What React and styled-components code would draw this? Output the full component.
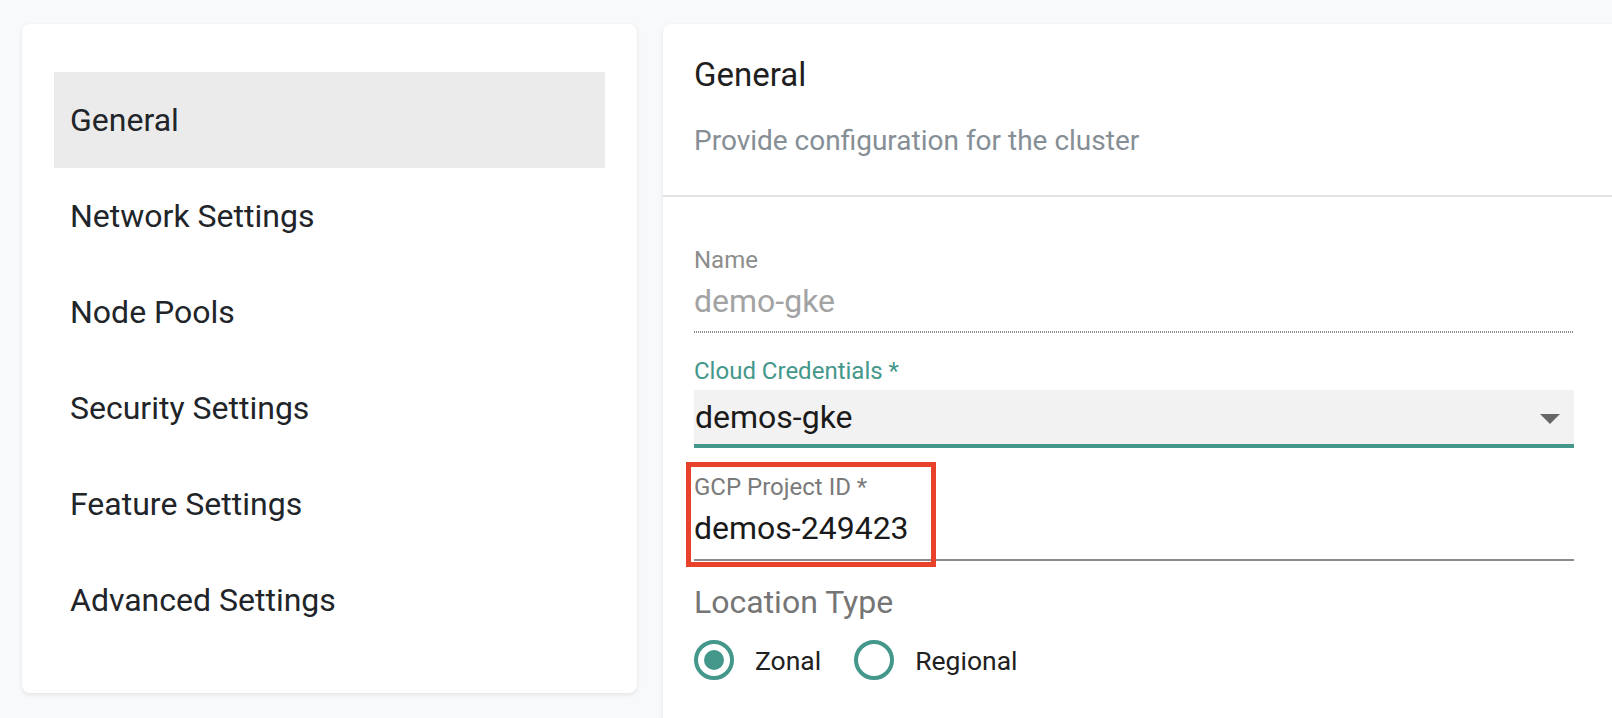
import React from "react";
import styled, { createGlobalStyle } from "styled-components";

const GlobalStyle = createGlobalStyle`
  html, body {
    margin: 0;
    padding: 0;
    background: #f8f9fa;
    overflow: hidden;
    font-family: Roboto, "Liberation Sans", Arial, sans-serif;
  }
  * { box-sizing: border-box; }
`;

const Page = styled.div`
  display: flex;
  align-items: flex-start;
  gap: 26px;
  width: 1640px;
  padding: 24px 0 0 22px;
`;

const SideCard = styled.nav`
  flex: 0 0 615px;
  background: #ffffff;
  border-radius: 8px;
  box-shadow: 0 2px 5px rgba(0, 0, 0, 0.08), 0 0 2px rgba(0, 0, 0, 0.04);
  padding: 48px 32px 45px;
  display: flex;
  flex-direction: column;
`;

const MenuItem = styled.div`
  height: 96px;
  display: flex;
  align-items: center;
  padding: 0 16px;
  font-size: 32px;
  color: #212529;
  background: ${(p) => (p.$active ? "#ebebeb" : "transparent")};
`;

const MainCard = styled.section`
  flex: 1;
  min-height: 720px;
  background: #ffffff;
  border-radius: 8px 0 0 0;
  box-shadow: 0 2px 5px rgba(0, 0, 0, 0.08), 0 0 2px rgba(0, 0, 0, 0.04);
`;

const Header = styled.header`
  padding: 31px 32px 36px 31px;
  border-bottom: 2px solid #e3e3e3;
`;

const Title = styled.h2`
  margin: 0;
  font-size: 33px;
  line-height: 40px;
  font-weight: 400;
  color: #1f1f1f;
`;

const Subtitle = styled.p`
  margin: 28px 0 0;
  font-size: 28px;
  line-height: 36px;
  color: #868e96;
`;

const Body = styled.div`
  padding: 49px 66px 0 31px;
  display: flex;
  flex-direction: column;
`;

const Field = styled.div`
  position: relative;
  display: flex;
  flex-direction: column;
  margin-top: ${(p) => p.$mt || 0}px;
`;

const Label = styled.label`
  font-size: 24px;
  line-height: 28px;
  color: ${(p) => p.$color || "#7a7a7a"};
`;

const Value = styled.div`
  margin-top: 7px;
  font-size: 32px;
  line-height: 40px;
  padding-bottom: ${(p) => (p.$dotted ? 12 : 11)}px;
  color: ${(p) => (p.$disabled ? "#a3a3a3" : "#1a1a1a")};
  ${(p) =>
    p.$dotted
      ? `background-image: linear-gradient(to right, #8c8c8c 50%, transparent 50%);
         background-size: 2px 2px;
         background-repeat: repeat-x;
         background-position: left bottom;`
      : `border-bottom: 2px solid #8c8c8c;`}
`;

const Select = styled.div`
  margin-top: 5px;
  height: 58px;
  background: #f2f2f2;
  border-bottom: 4px solid #44978b;
  display: flex;
  align-items: center;
  justify-content: space-between;
  padding: 0 14px 0 1px;
  font-size: 32px;
  color: #1a1a1a;
`;

const Caret = styled.span`
  width: 0;
  height: 0;
  border-left: 10px solid transparent;
  border-right: 10px solid transparent;
  border-top: 10px solid #666666;
  margin-top: 4px;
`;

const Highlight = styled.div`
  position: absolute;
  top: -11px;
  left: -8px;
  width: 250px;
  height: 105px;
  border: 5px solid #e8432a;
  pointer-events: none;
`;

const SectionTitle = styled.div`
  margin-top: 21px;
  font-size: 32px;
  line-height: 40px;
  color: #757575;
`;

const RadioRow = styled.div`
  margin-top: 18px;
  display: flex;
  align-items: center;
`;

const RadioOption = styled.label`
  display: flex;
  align-items: center;
  gap: 21px;
  margin-right: 33px;
  font-size: 26.5px;
  color: #212121;
`;

const RadioCircle = styled.span`
  width: 40px;
  height: 40px;
  border-radius: 50%;
  border: 4px solid #44978b;
  display: flex;
  align-items: center;
  justify-content: center;
  &::after {
    content: "";
    width: 20px;
    height: 20px;
    border-radius: 50%;
    background: #44978b;
    display: ${(p) => (p.$checked ? "block" : "none")};
  }
`;

const menu = [
  "General",
  "Network Settings",
  "Node Pools",
  "Security Settings",
  "Feature Settings",
  "Advanced Settings",
];

export default function App() {
  return (
    <>
      <GlobalStyle />
      <Page>
        <SideCard>
          {menu.map((m, i) => (
            <MenuItem key={m} $active={i === 0}>
              {m}
            </MenuItem>
          ))}
        </SideCard>
        <MainCard>
          <Header>
            <Title>General</Title>
            <Subtitle>Provide configuration for the cluster</Subtitle>
          </Header>
          <Body>
            <Field>
              <Label $color="#8d8d8d">Name</Label>
              <Value $disabled $dotted>
                demo-gke
              </Value>
            </Field>
            <Field $mt={24}>
              <Label $color="#44978b">Cloud Credentials *</Label>
              <Select>
                <span>demos-gke</span>
                <Caret />
              </Select>
            </Field>
            <Field $mt={25}>
              <Label>GCP Project ID *</Label>
              <Value>demos-249423</Value>
              <Highlight />
            </Field>
            <SectionTitle>Location Type</SectionTitle>
            <RadioRow>
              <RadioOption>
                <RadioCircle $checked />
                Zonal
              </RadioOption>
              <RadioOption>
                <RadioCircle />
                Regional
              </RadioOption>
            </RadioRow>
          </Body>
        </MainCard>
      </Page>
    </>
  );
}
